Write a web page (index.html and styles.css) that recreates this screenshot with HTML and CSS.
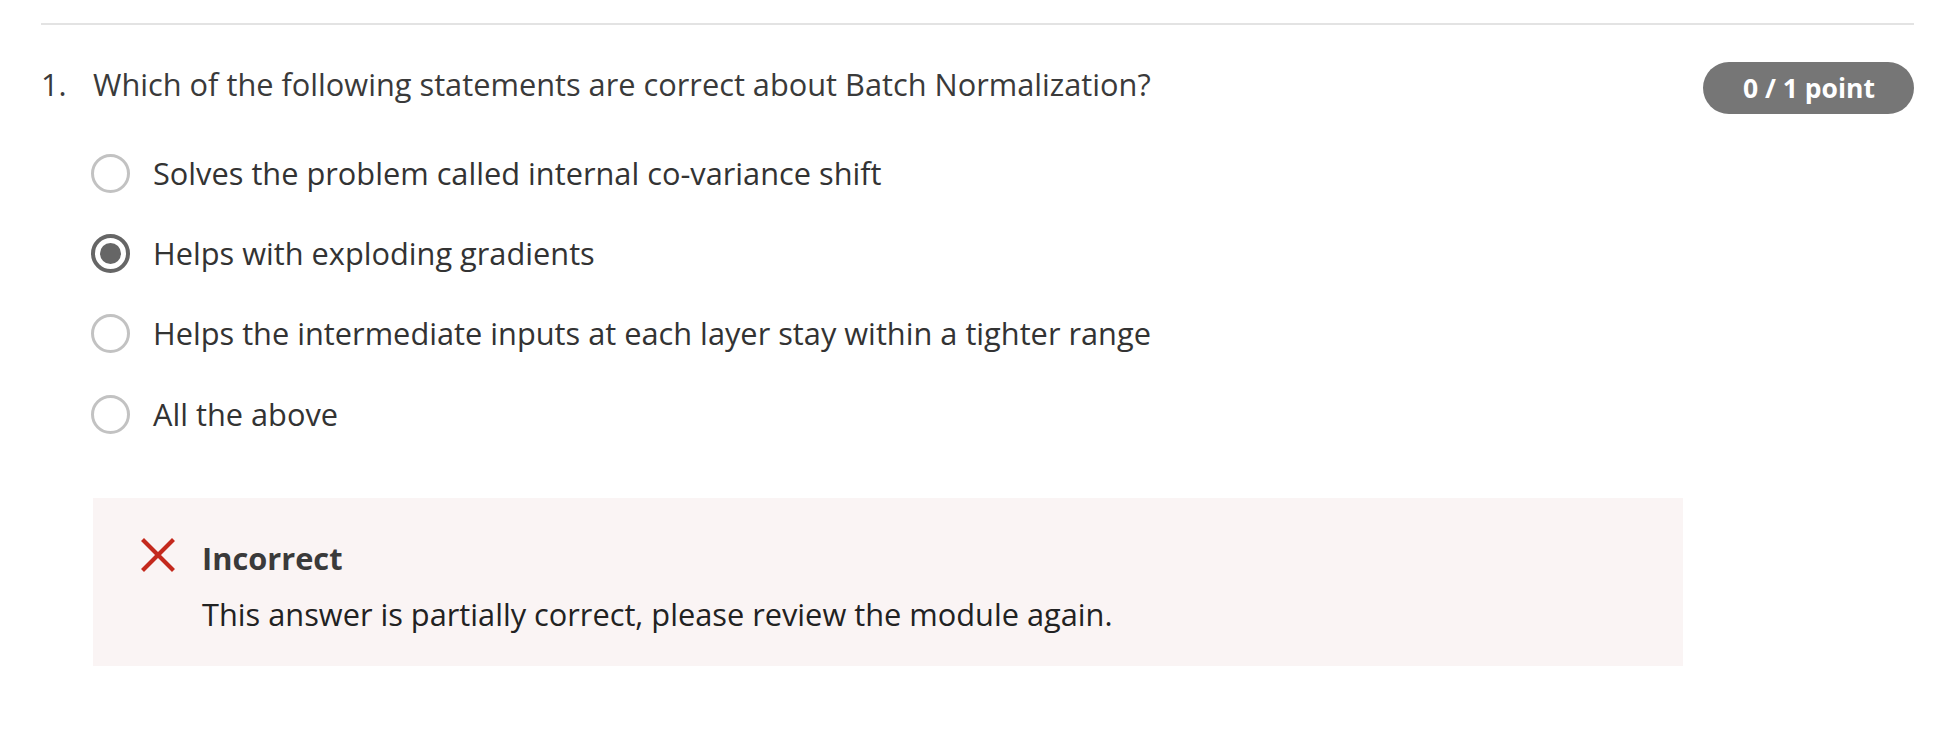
FILE: index.html
```html
<!DOCTYPE html>
<html lang="en">
<head>
<meta charset="utf-8">
<title>Quiz question</title>
<link rel="stylesheet" href="styles.css">
</head>
<body>
<div class="page">
  <div class="rule"></div>
  <div class="question">
    <div class="qnum">1.</div>
    <div class="qtext">Which of the following statements are correct about Batch Normalization?</div>
    <div class="badge">0 / 1 point</div>
  </div>
  <div class="options">
    <div class="option"><span class="radio"></span><span class="label">Solves the problem called internal co-variance shift</span></div>
    <div class="option"><span class="radio checked"><span class="dot"></span></span><span class="label">Helps with exploding gradients</span></div>
    <div class="option"><span class="radio"></span><span class="label">Helps the intermediate inputs at each layer stay within a tighter range</span></div>
    <div class="option"><span class="radio"></span><span class="label">All the above</span></div>
  </div>
  <div class="feedback">
    <div class="ficon">
      <svg width="34" height="34" viewBox="0 0 34 34"><path d="M3 3 L31 31 M31 3 L3 31" stroke="#c4291d" stroke-width="4.2" stroke-linecap="square" fill="none"/></svg>
    </div>
    <div class="fbody">
      <div class="ftitle">Incorrect</div>
      <div class="fmsg">This answer is partially correct, please review the module again.</div>
    </div>
  </div>
</div>
</body>
</html>
```

FILE: styles.css
```css
html, body {
  margin: 0;
  padding: 0;
  background: #ffffff;
}
body {
  font-family: "Open Sans", "Noto Sans", "Liberation Sans", sans-serif;
  color: #333333;
}
.page {
  padding: 23px 46px 0 41px;
}
.rule {
  height: 2px;
  background: #e3e3e3;
}
.question {
  display: flex;
  align-items: flex-start;
  margin-top: 37px;
}
.qnum {
  width: 52px;
  flex: none;
  font-size: 30.75px;
  line-height: 45px;
  color: #3a3a3a;
}
.qtext {
  flex: 1;
  font-size: 30.75px;
  line-height: 45px;
  color: #3a3a3a;
}
.badge {
  flex: none;
  height: 52px;
  padding: 0 39px 0 40px;
  border-radius: 26px;
  background: #767676;
  color: #ffffff;
  font-weight: 700;
  font-size: 26.5px;
  line-height: 52px;
  box-sizing: border-box;
}
.options {
  margin: 19px 0 0 50px;
}
.option {
  display: flex;
  align-items: center;
  height: 80.4px;
}
.radio {
  flex: none;
  width: 39px;
  height: 39px;
  border-radius: 50%;
  border: 3px solid #c2c2c2;
  box-sizing: border-box;
  display: flex;
  align-items: center;
  justify-content: center;
}
.radio.checked {
  border: 4px solid #666666;
}
.dot {
  width: 21px;
  height: 21px;
  border-radius: 50%;
  background: #666666;
}
.label {
  margin-left: 23px;
  font-size: 30.75px;
  line-height: 45px;
  color: #333333;
}
.feedback {
  display: flex;
  align-items: flex-start;
  width: 1590px;
  margin: 43px 0 0 52px;
  padding: 38px 48px 29px 48px;
  box-sizing: border-box;
  background: #faf4f4;
}
.ficon {
  flex: none;
  width: 34px;
  height: 34px;
  margin-top: 2px;
  margin-right: 27px;
}
.ficon svg {
  display: block;
}
.ftitle {
  font-size: 30.75px;
  font-weight: 700;
  line-height: 45px;
  color: #3a3a3a;
}
.fmsg {
  margin-top: 11px;
  font-size: 30.75px;
  line-height: 45px;
  color: #222222;
}
```
